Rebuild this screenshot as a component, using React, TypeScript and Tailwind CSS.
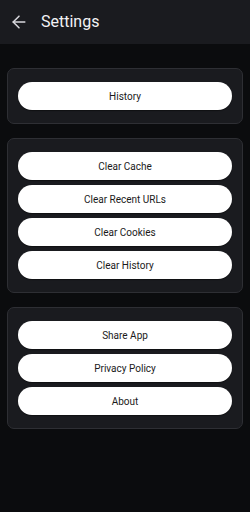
import { ArrowLeft } from 'lucide-react';

const groups = [
  ['History'],
  ['Clear Cache', 'Clear Recent URLs', 'Clear Cookies', 'Clear History'],
  ['Share App', 'Privacy Policy', 'About'],
];

const App = () => {
  return (
    <div className="min-h-[512px] bg-[#0b0c0e] font-['Roboto',sans-serif]">
      <header className="flex h-[44px] items-center bg-[#1a1b1f] pl-[9px]">
        <ArrowLeft className="h-[20px] w-[20px] text-[#d9d9de]" strokeWidth={1.8} />
        <h1 className="ml-[12px] text-[16px] text-[#f2f2f5]">Settings</h1>
      </header>

      <div className="flex flex-col gap-[14px] px-[7px] pt-[24px]">
        {groups.map((items, i) => (
          <div
            key={i}
            className="flex flex-col gap-[5px] rounded-[7px] border border-[#2e2f34] bg-[#1a1b1f] px-[10px] py-[13px]"
          >
            {items.map((label) => (
              <button
                key={label}
                className="h-[28px] w-full rounded-full bg-white text-[10px] text-[#1a1a1a] shadow-[0_1px_1px_rgba(0,0,0,0.4)]"
              >
                {label}
              </button>
            ))}
          </div>
        ))}
      </div>
    </div>
  );
};

export default App;
